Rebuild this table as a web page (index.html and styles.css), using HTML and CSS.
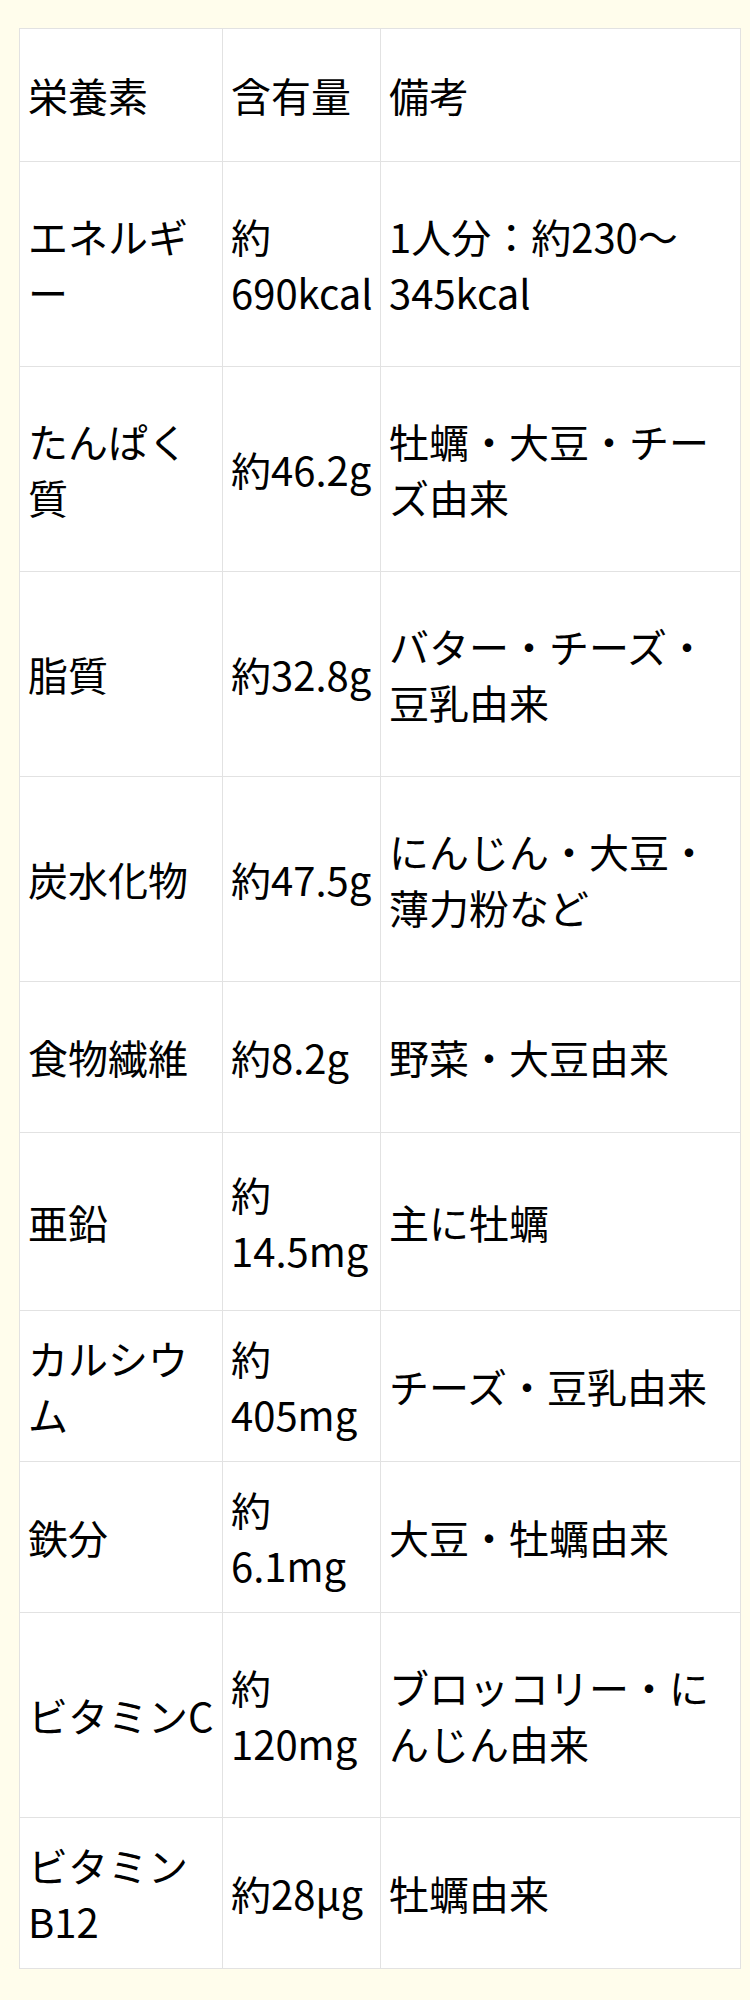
FILE: index.html
```html
<!DOCTYPE html>
<html lang="ja">
<head>
<meta charset="utf-8">
<title>栄養素</title>
<link rel="stylesheet" href="styles.css">
</head>
<body>
<div class="page">
  <table class="nutri">
    <colgroup>
      <col class="c1">
      <col class="c2">
      <col class="c3">
    </colgroup>
    <thead>
      <tr class="r-head"><th>栄養素</th><th>含有量</th><th>備考</th></tr>
    </thead>
    <tbody>
      <tr class="r-tall"><td>エネルギー</td><td>約690kcal</td><td>1人分：約230〜345kcal</td></tr>
      <tr class="r-tall"><td>たんぱく質</td><td>約46.2g</td><td>牡蠣・大豆・チーズ由来</td></tr>
      <tr class="r-tall"><td>脂質</td><td>約32.8g</td><td>バター・チーズ・豆乳由来</td></tr>
      <tr class="r-tall"><td>炭水化物</td><td>約47.5g</td><td>にんじん・大豆・薄力粉など</td></tr>
      <tr class="r-short"><td>食物繊維</td><td>約8.2g</td><td>野菜・大豆由来</td></tr>
      <tr class="r-mid"><td>亜鉛</td><td>約14.5mg</td><td>主に牡蠣</td></tr>
      <tr class="r-short"><td>カルシウム</td><td>約405mg</td><td>チーズ・豆乳由来</td></tr>
      <tr class="r-short"><td>鉄分</td><td>約6.1mg</td><td>大豆・牡蠣由来</td></tr>
      <tr class="r-tall"><td>ビタミンC</td><td>約120mg</td><td>ブロッコリー・にんじん由来</td></tr>
      <tr class="r-short"><td>ビタミン B12</td><td>約28μg</td><td>牡蠣由来</td></tr>
    </tbody>
  </table>
</div>
</body>
</html>
```
FILE: styles.css
```css
html, body {
  margin: 0;
  padding: 0;
  background: #fffdec;
}

.page {
  padding: 28px 10px 30px 19px;
  font-family: "Noto Sans CJK JP", "Noto Sans", sans-serif;
  color: #000;
}

.nutri {
  border-collapse: collapse;
  table-layout: fixed;
  width: 721px;
  background: #ffffff;
  font-size: 40px;
  line-height: 56px;
}

.c1 { width: 203px; }
.c2 { width: 158px; }
.c3 { width: 360px; }

.nutri th,
.nutri td {
  border: 1px solid #e2e2e2;
  padding: 0 8px;
  text-align: left;
  vertical-align: middle;
  font-weight: 400;
}

.r-head { height: 133px; }
.r-tall { height: 205px; }
.r-mid { height: 178px; }
.r-short { height: 151px; }
```
